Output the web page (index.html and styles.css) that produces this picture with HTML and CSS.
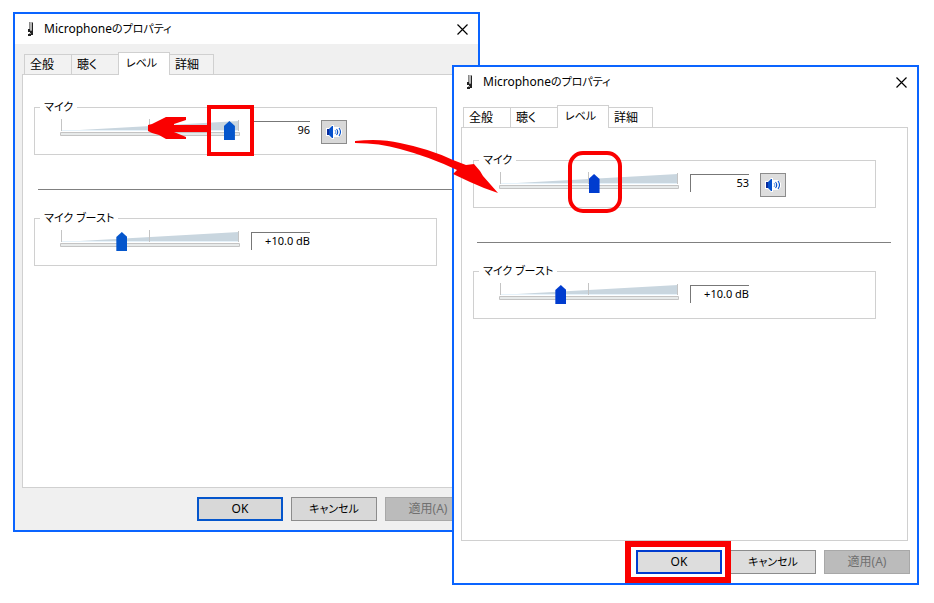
FILE: index.html
```
<!DOCTYPE html>
<html lang="ja">
<head>
    <meta charset="UTF-8">
    <meta name="viewport" content="width=device-width, initial-scale=1.0">
    <title>Microphoneのプロパティ</title>
    <link rel="stylesheet" href="styles.css">
</head>
<body>
    <!-- shared icons -->
    <svg class="defs" width="0" height="0" aria-hidden="true">
        <symbol id="mic" viewBox="0 0 10 16">
            <path d="M3 1h4v9H3z" fill="#8a8a8a"/>
            <path d="M4 1h2v8H4z" fill="#b5b5b5"/>
            <path d="M6 2h1v9H6zM2 8h2v2h3v4H5v1H2v-2h2v-2H2z" fill="#222"/>
            <path d="M3 12h2v1H3z" fill="#999"/>
        </symbol>
        <symbol id="close" viewBox="0 0 11 11">
            <path d="M.5 .5l10 10M10.5 .5l-10 10" fill="none" stroke="#000" stroke-width="1.2"/>
        </symbol>
        <symbol id="speaker" viewBox="0 0 16 14">
            <path d="M0 3h3l3-3h2v2h5l3 3v4l-3 3H8v2H6l-3-3H0z" fill="#fff"/>
            <path d="M1 4h2v6H1z" fill="#0a2c9c"/>
            <path d="M3 4l3-3h1v12H6l-3-3z" fill="#0450cc"/>
            <path d="M9 5q2 2 0 4" fill="none" stroke="#5f93e0" stroke-width="1"/>
            <path d="M10.500 4q2.500 3 0 6M13 3q3 4 0 8" fill="none" stroke="#0450cc" stroke-width="1.1"/>
        </symbol>
        <symbol id="scale" viewBox="0 0 180 19" preserveAspectRatio="none">
            <path d="M2 12L179 2v10z" fill="#c9d6df"/>
            <path d="M2 11.500H178" stroke="#e6f2fa"/>
            <path d="M1.500 0v12M89.500 0v12M178.500 1v11" stroke="#c4c4c4"/>
            <path d="M.5 13.500h179v3H.5z" fill="#e7eaea" stroke="#c4c4c4"/>
        </symbol>
    </svg>

    <main class="desktop">
        <section class="window before">
            <header class="titlebar">
                <svg class="mic"><use href="#mic"/></svg>
                <h1>Microphone<span class="kana">のプロパティ</span></h1>
                <button class="close" aria-label="閉じる"><svg><use href="#close"/></svg></button>
            </header>
            <nav class="tabs" role="tablist">
                <button role="tab">全般</button>
                <button role="tab">聴く</button>
                <button role="tab" class="active" aria-selected="true"><span class="kana">レベル</span></button>
                <button role="tab">詳細</button>
            </nav>
            <div class="panel">
                <fieldset>
                    <legend class="kana">マイク</legend>
                    <div class="level">
                        <div class="slider">
                            <svg><use href="#scale"/></svg>
                            <input type="range" min="0" max="100" value="97" aria-label="マイク">
                        </div>
                        <output>96</output>
                        <button class="mute" aria-label="ミュート"><svg><use href="#speaker"/></svg></button>
                    </div>
                </fieldset>
                <hr>
                <fieldset>
                    <legend class="kana">マイク ブースト</legend>
                    <div class="level">
                        <div class="slider">
                            <svg><use href="#scale"/></svg>
                            <input type="range" min="0" max="30" value="10" aria-label="マイク ブースト">
                        </div>
                        <output>+10.0 dB</output>
                    </div>
                </fieldset>
            </div>
            <footer class="actions">
                <button class="default">OK</button>
                <button><span class="kana">キャンセル</span></button>
                <button disabled>適用(A)</button>
            </footer>
        </section>

        <section class="window after">
            <header class="titlebar">
                <svg class="mic"><use href="#mic"/></svg>
                <h1>Microphone<span class="kana">のプロパティ</span></h1>
                <button class="close" aria-label="閉じる"><svg><use href="#close"/></svg></button>
            </header>
            <nav class="tabs" role="tablist">
                <button role="tab">全般</button>
                <button role="tab">聴く</button>
                <button role="tab" class="active" aria-selected="true"><span class="kana">レベル</span></button>
                <button role="tab">詳細</button>
            </nav>
            <div class="panel">
                <fieldset>
                    <legend class="kana">マイク</legend>
                    <div class="level">
                        <div class="slider">
                            <svg><use href="#scale"/></svg>
                            <input type="range" min="0" max="100" value="53" aria-label="マイク">
                        </div>
                        <output>53</output>
                        <button class="mute" aria-label="ミュート"><svg><use href="#speaker"/></svg></button>
                    </div>
                </fieldset>
                <hr>
                <fieldset>
                    <legend class="kana">マイク ブースト</legend>
                    <div class="level">
                        <div class="slider">
                            <svg><use href="#scale"/></svg>
                            <input type="range" min="0" max="30" value="10" aria-label="マイク ブースト">
                        </div>
                        <output>+10.0 dB</output>
                    </div>
                </fieldset>
            </div>
            <footer class="actions">
                <button class="default">OK</button>
                <button><span class="kana">キャンセル</span></button>
                <button disabled>適用(A)</button>
            </footer>
        </section>

        <!-- red marks drawn over both windows -->
        <svg class="marks" width="934" height="603" viewBox="0 0 934 603" aria-hidden="true">
            <rect x="209" y="107" width="43" height="47" stroke-width="4"/>
            <rect x="570" y="153" width="50" height="58" rx="13" stroke-width="4"/>
            <rect x="628" y="544" width="100" height="36" stroke-width="6"/>
            <path class="arrow" d="M148 125L152 124L160 120L166 117H186V120L174 124V125H208V132H174L186 137V139H166L159 135L152 133L148 131z"/>
            <path class="arrow" d="M355 141Q380 138 400 143Q430 149 453 160L466 165L474 164L480 171L483 176L498 193L484 188L470 182L453 174L457 170Q430 157 400 149Q380 143 355 143z"/>
        </svg>
    </main>
</body>
</html>
```
FILE: styles.css
```
* {
    box-sizing: border-box;
}
body {
    margin: 0;
    background-color: #fff;
    color: #000;
    font-family: "Noto Sans", "Noto Sans CJK JP", sans-serif;
    font-size: 12px;
    line-height: 16px;
    font-feature-settings: "palt";
}
button, input {
    margin: 0;
    padding: 0;
    font: inherit;
    color: inherit;
    font-feature-settings: inherit;
}
.defs {
    position: absolute;
}
.kana {
    font-size: 11px;
}
.desktop {
    position: relative;
    min-height: 100vh;
    overflow: hidden;
}

/* windows */
.window {
    --accent: #0556cc;
    --face: #d8d8d8;
    position: absolute;
    display: flex;
    flex-direction: column;
    width: 50%;
    min-width: 467px;
    min-height: 520px;
    border: 2px solid #0a64ff;
    background-color: #fff;
}
.before {
    left: 13px;
    top: 12px;
    background-color: #f0f0f0;
}
.after {
    --accent: #003ccf;
    --face: #dddddd;
    left: 452px;
    top: 65px;
}
.titlebar {
    display: flex;
    align-items: center;
    height: 30px;
    padding: 0 10px 0 11px;
    background-color: #fff;
}
.titlebar h1 {
    flex: 1;
    margin: 0 0 0 8px;
    font-size: 12px;
    font-weight: normal;
}
.mic {
    width: 10px;
    height: 16px;
}
.close {
    display: flex;
    border: none;
    background: none;
}
.close svg {
    width: 11px;
    height: 11px;
}

/* tabs */
.tabs {
    display: flex;
    align-items: flex-end;
    padding: 8px 9px 0;
}
.tabs button {
    width: 48px;
    height: 20px;
    margin-right: -1px;
    padding-left: 5px;
    border: 1px solid #d0d0d0;
    border-bottom: none;
    background: #f2f2f2;
    text-align: left;
}
.after .tabs button {
    background: #fff;
}
.tabs button:last-child {
    width: 45px;
}
.tabs .active, .after .tabs .active {
    position: relative;
    width: 52px;
    height: 23px;
    margin-bottom: -1px;
    padding: 0 0 2px 7px;
    background: #fff;
}
.panel {
    flex: 1;
    margin: 0 9px 0 7px;
    padding: 24px 31px 0 11px;
    border: 1px solid #d0d0d0;
    background-color: #fff;
}

/* level groups */
fieldset {
    min-width: 0;
    height: 56px;
    margin: 0;
    padding: 4px 25px 0;
    border: 1px solid #d0d0d0;
}
legend {
    margin-left: -20px;
    padding: 0 4px;
}
.level {
    display: flex;
    align-items: flex-start;
}
.slider {
    display: grid;
    width: 180px;
    height: 21px;
}
.slider svg, .slider input {
    grid-area: 1 / 1;
    width: 180px;
}
.slider svg {
    height: 19px;
}
.slider input {
    height: 21px;
    padding-top: 2px;
    appearance: none;
    background: none;
}
.slider input::-webkit-slider-thumb {
    appearance: none;
    width: 11px;
    height: 19px;
    background-color: var(--accent);
    clip-path: polygon(50% 0, 100% 26%, 100% 100%, 0 100%, 0 26%);
}
output {
    width: 59px;
    height: 18px;
    margin: 2px 11px 0;
    border-top: 1px solid #777;
    border-left: 1px solid #777;
    font-size: 11px;
    text-align: right;
}
.mute {
    display: flex;
    align-items: center;
    justify-content: center;
    width: 26px;
    height: 24px;
    margin-top: 1px;
    border: 1px solid #8c8c8c;
    background-color: var(--face);
}
.mute svg {
    width: 16px;
    height: 14px;
}
hr {
    height: 1px;
    margin: 34px -15px 20px 4px;
    border: none;
    background-color: #808080;
}

/* bottom buttons */
.actions {
    display: flex;
    justify-content: flex-end;
    gap: 8px;
    padding: 9px 7px;
}
.actions button {
    width: 86px;
    height: 24px;
    border: 1px solid #8c8c8c;
    background-color: var(--face);
}
.actions .default {
    border: 2px solid var(--accent);
}
.actions button:disabled {
    border-color: #a8a8a8;
    background-color: #bbb;
    color: #707070;
}

/* red marks */
.marks {
    position: absolute;
    left: 0;
    top: 0;
    fill: none;
    stroke: #fa0000;
    pointer-events: none;
}
.arrow {
    fill: #fa0000;
    stroke: none;
}
```
